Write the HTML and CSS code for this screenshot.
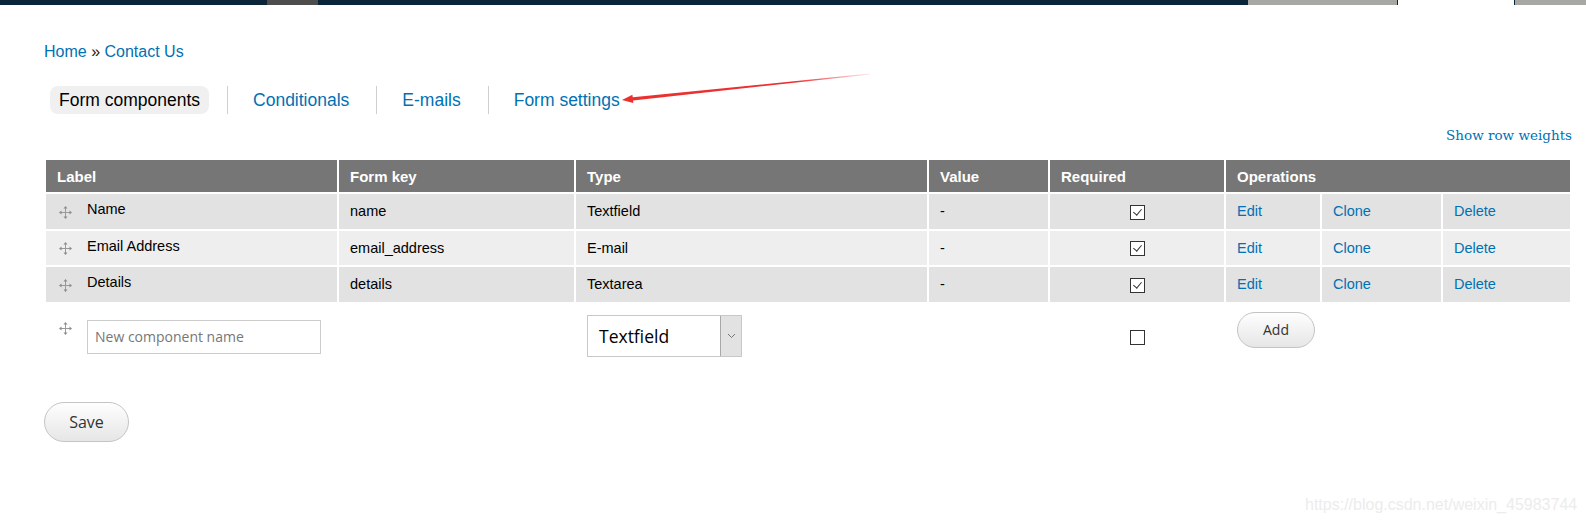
FILE: index.html
```html
<!DOCTYPE html>
<html>
<head>
    <link rel="stylesheet" href="styles.css">
</head>
<body>
    <div class="topbar">
        <span class="tb-blob"></span>
        <span class="tb-fill"></span>
        <span class="tb-gray"></span>
        <span class="tb-gap"></span>
        <span class="tb-gray tb-end"></span>
    </div>

    <div class="page">
        <div class="breadcrumb">
            <a href="#">Home</a> » <a href="#">Contact Us</a>
        </div>

        <ul class="tabs">
            <li class="active"><a href="#">Form components</a></li>
            <li><a href="#">Conditionals</a></li>
            <li><a href="#">E-mails</a></li>
            <li><a href="#">Form settings</a></li>
        </ul>

        <div class="weights-toggle"><a href="#">Show row weights</a></div>

        <table class="components">
            <thead>
                <tr>
                    <th class="col-label">Label</th>
                    <th class="col-key">Form key</th>
                    <th class="col-type">Type</th>
                    <th class="col-value">Value</th>
                    <th class="col-req">Required</th>
                    <th colspan="3">Operations</th>
                </tr>
            </thead>
            <tbody>
                <tr class="odd">
                    <td><div class="label-cell"><span class="handle"><svg width="13" height="13" viewBox="0 0 13 13"><path d="M6.5 2v9M2 6.5h9" stroke="#9a9a9a" stroke-width="1"/><path d="M6.5 0L8.5 2.5H4.5zM6.5 13L8.5 10.5H4.5zM0 6.5L2.5 4.5V8.5zM13 6.5L10.5 4.5V8.5z" fill="#8c8c8c"/></svg></span><span class="label-text">Name</span></div></td>
                    <td>name</td>
                    <td>Textfield</td>
                    <td>-</td>
                    <td class="req"><span class="check checked"></span></td>
                    <td class="op-edit"><a href="#">Edit</a></td>
                    <td class="op-clone"><a href="#">Clone</a></td>
                    <td class="op-delete"><a href="#">Delete</a></td>
                </tr>
                <tr class="even">
                    <td><div class="label-cell"><span class="handle"><svg width="13" height="13" viewBox="0 0 13 13"><path d="M6.5 2v9M2 6.5h9" stroke="#9a9a9a" stroke-width="1"/><path d="M6.5 0L8.5 2.5H4.5zM6.5 13L8.5 10.5H4.5zM0 6.5L2.5 4.5V8.5zM13 6.5L10.5 4.5V8.5z" fill="#8c8c8c"/></svg></span><span class="label-text">Email Address</span></div></td>
                    <td>email_address</td>
                    <td>E-mail</td>
                    <td>-</td>
                    <td class="req"><span class="check checked"></span></td>
                    <td class="op-edit"><a href="#">Edit</a></td>
                    <td class="op-clone"><a href="#">Clone</a></td>
                    <td class="op-delete"><a href="#">Delete</a></td>
                </tr>
                <tr class="odd">
                    <td><div class="label-cell"><span class="handle"><svg width="13" height="13" viewBox="0 0 13 13"><path d="M6.5 2v9M2 6.5h9" stroke="#9a9a9a" stroke-width="1"/><path d="M6.5 0L8.5 2.5H4.5zM6.5 13L8.5 10.5H4.5zM0 6.5L2.5 4.5V8.5zM13 6.5L10.5 4.5V8.5z" fill="#8c8c8c"/></svg></span><span class="label-text">Details</span></div></td>
                    <td>details</td>
                    <td>Textarea</td>
                    <td>-</td>
                    <td class="req"><span class="check checked"></span></td>
                    <td class="op-edit"><a href="#">Edit</a></td>
                    <td class="op-clone"><a href="#">Clone</a></td>
                    <td class="op-delete"><a href="#">Delete</a></td>
                </tr>
                <tr class="add-row">
                    <td>
                        <div class="label-cell new">
                            <span class="handle"><svg width="13" height="13" viewBox="0 0 13 13"><path d="M6.5 2v9M2 6.5h9" stroke="#9a9a9a" stroke-width="1"/><path d="M6.5 0L8.5 2.5H4.5zM6.5 13L8.5 10.5H4.5zM0 6.5L2.5 4.5V8.5zM13 6.5L10.5 4.5V8.5z" fill="#8c8c8c"/></svg></span>
                            <input class="text-input" type="text" placeholder="New component name">
                        </div>
                    </td>
                    <td></td>
                    <td>
                        <div class="select">
                            <span class="select-value">Textfield</span>
                            <span class="select-arrow">
                                <svg width="9" height="6" viewBox="0 0 9 6"><path d="M1 1l3.5 3.5L8 1" fill="none" stroke="#777" stroke-width="1"/></svg>
                            </span>
                        </div>
                    </td>
                    <td></td>
                    <td class="req"><span class="check"></span></td>
                    <td colspan="3"><button class="button add">Add</button></td>
                </tr>
            </tbody>
        </table>

        <div class="form-actions">
            <button class="button save">Save</button>
        </div>
    </div>

    <svg class="annotation" width="1586" height="526" viewBox="0 0 1586 526">
        <defs>
            <linearGradient id="fade" x1="622" y1="0" x2="870" y2="0" gradientUnits="userSpaceOnUse">
                <stop offset="0" stop-color="#ec2f2f"/>
                <stop offset="0.7" stop-color="#ec2f2f"/>
                <stop offset="1" stop-color="#ec2f2f" stop-opacity="0.1"/>
            </linearGradient>
        </defs>
        <polygon points="622,100 633.3,103 633.1,100.4 870,74.4 870,73.6 632.7,97.3 632.4,94.7" fill="url(#fade)"/>
    </svg>

    <div class="watermark">https://blog.csdn.net/weixin_45983744</div>
</body>
</html>
```

FILE: styles.css
```css
body {
    margin: 0;
    background: #fff;
    color: #000;
    font-family: "Liberation Sans", Arial, sans-serif;
    position: relative;
    height: 526px;
    overflow: hidden;
}
a {
    color: #0071b3;
    text-decoration: none;
}

/* cut-off header strip */
.topbar {
    display: flex;
    height: 5px;
    background: #0a2538;
}
.tb-blob {
    margin-left: 267px;
    width: 51px;
    background: #4d4d4d;
}
.tb-fill {
    flex: 1;
}
.tb-gray {
    width: 149px;
    background: #a7a7a3;
}
.tb-gap {
    width: 116px;
    background: #fff;
    border-left: 1px solid #0a2538;
    border-right: 1px solid #0a2538;
}
.tb-end {
    width: 71px;
}

.page {
    padding: 0 14px 0 44px;
}

.breadcrumb {
    margin-top: 37px;
    font-size: 16px;
    line-height: 20px;
    color: #1a1a1a;
}

.tabs {
    list-style: none;
    display: flex;
    margin: 24px 0 0 6px;
    padding: 0;
}
.tabs li {
    display: flex;
}
.tabs li + li {
    margin-left: 18px;
    padding-left: 16px;
    border-left: 1px solid #d0d0d0;
}
.tabs a {
    display: block;
    padding: 4px 9px;
    font-size: 17.5px;
    line-height: 20px;
    border-radius: 8px;
}
.tabs .active a {
    background: #f0f0f0;
    color: #000;
}

.weights-toggle {
    margin-top: 13px;
    text-align: right;
    font-family: "DejaVu Serif", Georgia, serif;
    font-size: 13.5px;
    line-height: 16px;
}

.components {
    margin-top: 15px;
    width: 100%;
    border-collapse: collapse;
    font-size: 14.5px;
}
.components th,
.components td {
    border: 2px solid #fff;
    padding: 0 11px;
    text-align: left;
}
.components th {
    background: #767676;
    color: #fff;
    font-size: 15px;
    font-weight: bold;
    height: 32px;
}
.components td {
    height: 34.5px;
}
.col-label { width: 269px; }
.col-key { width: 213px; }
.col-type { width: 329px; }
.col-value { width: 97px; }
.col-req { width: 152px; }
.op-edit { width: 72px; }
.op-clone { width: 97px; }

.components tr.odd td {
    background: #e2e2e2;
}
.components tr.even td {
    background: #eeeeee;
}
.components td.req {
    text-align: center;
}

.label-cell {
    display: flex;
    align-items: center;
}
.label-text {
    padding-bottom: 4px;
}
.handle {
    display: flex;
    width: 13px;
    height: 13px;
    margin: 2px 15px 0 2px;
    flex: none;
}

.check {
    display: inline-block;
    width: 13px;
    height: 13px;
    border: 1px solid #333;
    background: #fff;
    vertical-align: middle;
    position: relative;
}
.check.checked::after {
    content: "";
    position: absolute;
    left: 4px;
    top: 1px;
    width: 4px;
    height: 7px;
    border-right: 1px solid #333;
    border-bottom: 1px solid #333;
    transform: rotate(40deg);
}

.add-row td {
    vertical-align: top;
    height: 60px;
    padding-top: 6px;
}
.label-cell.new {
    align-items: flex-start;
}
.label-cell.new .handle {
    margin-top: 12px;
}
.text-input {
    margin-top: 10px;
    width: 234px;
    height: 34px;
    box-sizing: border-box;
    border: 1px solid #ccc;
    padding: 0 7px;
    font-family: "Open Sans", sans-serif;
    font-size: 14px;
    color: #333;
}
.text-input::placeholder {
    color: #777;
}

.select {
    margin-top: 5px;
    display: flex;
    width: 155px;
    height: 42px;
    box-sizing: border-box;
    border: 1px solid #c8c8c8;
    font-family: "Open Sans", sans-serif;
    font-size: 17.5px;
    color: #000;
}
.select-value {
    flex: 1;
    padding-left: 11px;
    line-height: 40px;
}
.select-arrow {
    width: 20px;
    background: #e2e2e2;
    border-left: 1px solid #a8a8a8;
    display: flex;
    align-items: center;
    justify-content: center;
}

.add-row td.req .check {
    margin-top: 20px;
}

.button {
    font-family: "Open Sans", sans-serif;
    color: #333;
    border: 1px solid #c4c4c4;
    background: linear-gradient(#fefefe, #e6e6e6);
    cursor: pointer;
}
.button.add {
    margin-top: 2px;
    width: 78px;
    height: 36px;
    border-radius: 18px;
    font-size: 14px;
}
.form-actions {
    margin-top: 30px;
}
.button.save {
    width: 85px;
    height: 40px;
    border-radius: 20px;
    font-size: 16px;
}

.annotation {
    position: absolute;
    top: 0;
    left: 0;
    pointer-events: none;
}

.watermark {
    position: absolute;
    left: 1305px;
    top: 496px;
    font-size: 16px;
    color: #ececec;
    white-space: nowrap;
}
```
